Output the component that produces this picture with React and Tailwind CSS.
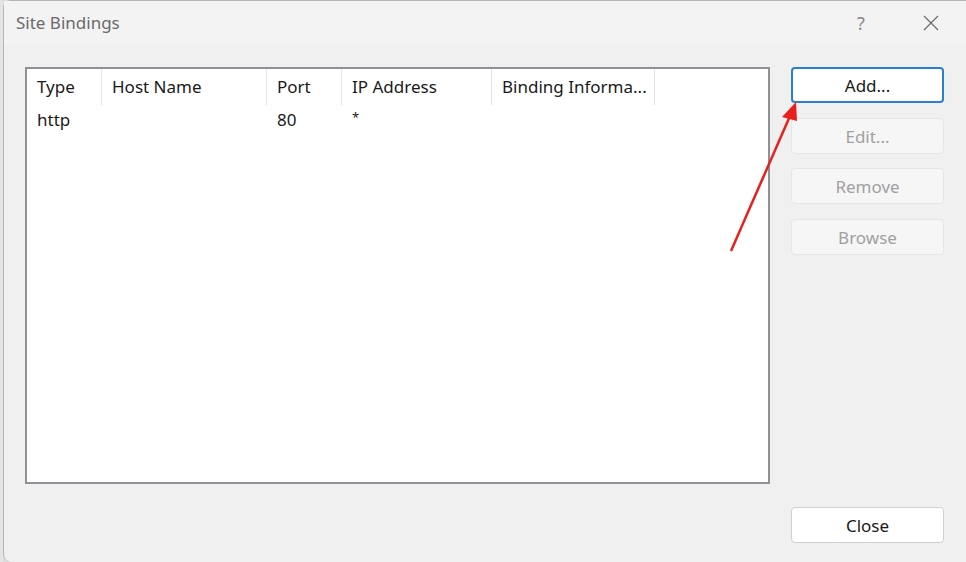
import React from 'react';

const columns = [
  { label: 'Type', width: 'w-[75px]' },
  { label: 'Host Name', width: 'w-[165px]' },
  { label: 'Port', width: 'w-[75px]' },
  { label: 'IP Address', width: 'w-[150px]' },
  { label: 'Binding Informa...', width: 'w-[163px]' },
];

const rows = [{ type: 'http', host: '', port: '80', ip: '*', info: '' }];

// Side buttons of the dialog
const SideButton = ({ children, primary, disabled }) => {
  if (disabled) {
    return (
      <button className="h-[36px] w-[153px] rounded-[4px] border border-[#e6e6e6] bg-[#f6f6f6] pt-[2px] text-[17px] text-[#a0a0a0]">
        {children}
      </button>
    );
  }
  return (
    <button
      className={`h-[36px] w-[153px] rounded-[4px] bg-white pt-[2px] text-[17px] text-[#1a1a1a] ${
        primary ? 'border-2 border-[#2a7fd4]' : 'border border-[#d0d0d0]'
      }`}
    >
      {children}
    </button>
  );
};

export default function App() {
  return (
    <div
      className="flex h-[562px] w-[966px] overflow-hidden bg-[#dcdcdc]"
      style={{ fontFamily: '"Noto Sans", "Open Sans", sans-serif' }}
    >
      {/* sliver of the window behind */}
      <div className="w-[3px] shrink-0 bg-[#e4e4e4]" />

      <div className="flex flex-1 flex-col rounded-l-[8px] border-l border-t border-[#b5b5b5] bg-[#f0f0f0]">
        {/* title bar */}
        <div className="flex h-[44px] items-center bg-[#f3f3f3] pl-[12px]">
          <span className="text-[17px] text-[#6a6a6a]">Site Bindings</span>
          <div className="ml-auto flex items-center">
            <span className="w-[70px] text-center text-[18px] text-[#8a8a8a]">?</span>
            <div className="flex w-[70px] justify-center">
              <svg width="16" height="16" viewBox="0 0 16 16">
                <path d="M1 1 L15 15 M15 1 L1 15" stroke="#6a6a6a" strokeWidth="1.2" fill="none" />
              </svg>
            </div>
          </div>
        </div>

        {/* body */}
        <div className="flex flex-1 pl-[21px] pt-[22px]">
          <div className="h-[417px] w-[745px] border-2 border-[#8e9297] bg-white">
            <div className="flex h-[36px]">
              {columns.map((c) => (
                <div key={c.label} className={`${c.width} flex items-center border-r border-[#e3e3e3] pl-[10px] text-[17px] text-[#1a1a1a]`}>
                  {c.label}
                </div>
              ))}
            </div>
            {rows.map((r, i) => (
              <div key={i} className="flex h-[30px] items-center text-[17px] text-[#1a1a1a]">
                <div className="w-[75px] pl-[10px]">{r.type}</div>
                <div className="w-[165px] pl-[10px]">{r.host}</div>
                <div className="w-[75px] pl-[10px]">{r.port}</div>
                <div className="w-[150px] pb-[4px] pl-[10px] text-[13px]">{r.ip}</div>
                <div className="w-[163px] pl-[10px]">{r.info}</div>
              </div>
            ))}
          </div>

          <div className="ml-[21px] flex flex-col pb-[19px]">
            <div className="flex flex-col gap-[14.5px]">
              <SideButton primary>Add...</SideButton>
              <SideButton disabled>Edit...</SideButton>
              <SideButton disabled>Remove</SideButton>
              <SideButton disabled>Browse</SideButton>
            </div>
            <div className="mt-auto">
              <SideButton>Close</SideButton>
            </div>
          </div>
        </div>
      </div>

      {/* red annotation arrow */}
      <svg className="pointer-events-none absolute left-0 top-0" width="966" height="562">
        <line x1="731" y1="251" x2="790" y2="116" stroke="#e8201c" strokeWidth="2.5" />
        <polygon points="796,102 782,117 797,121" fill="#e8201c" />
      </svg>
    </div>
  );
}
